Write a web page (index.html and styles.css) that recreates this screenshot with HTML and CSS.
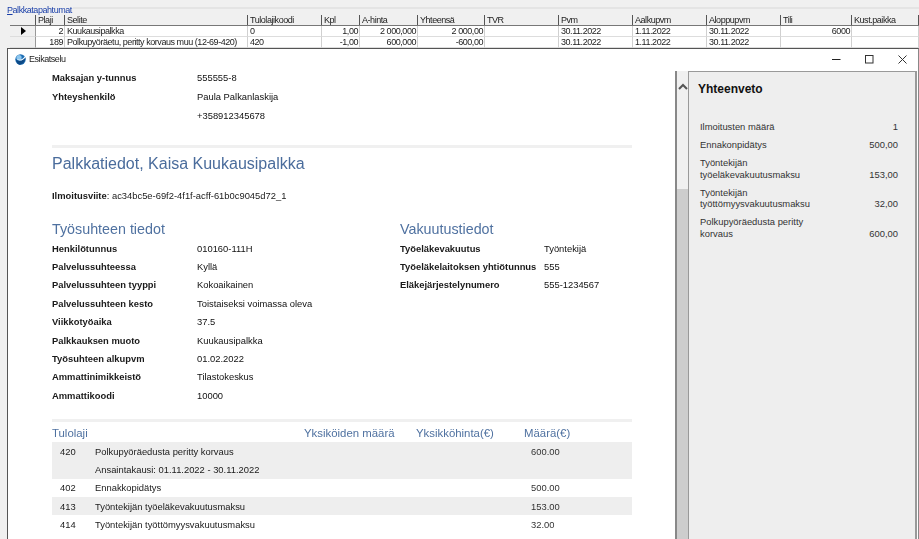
FILE: index.html
```html
<!DOCTYPE html>
<html lang="fi">
<head>
<meta charset="utf-8">
<title>Esikatselu</title>
<link rel="stylesheet" href="styles.css">
</head>
<body>
<section class="group">
  <div class="group-title"><span class="group-label"><u>P</u>alkkatapahtumat</span><span class="group-line"></span></div>
  <div class="grid">
    <div class="grid-row head">
      <div class="c"></div><div class="c">Plaji</div><div class="c">Selite</div><div class="c">Tulolajikoodi</div><div class="c">Kpl</div><div class="c">A-hinta</div><div class="c">Yhteensä</div><div class="c">TVR</div><div class="c">Pvm</div><div class="c">Aalkupvm</div><div class="c">Aloppupvm</div><div class="c">Tili</div><div class="c">Kust.paikka</div>
    </div>
    <div class="grid-row">
      <div class="c rowhead"><span class="arrow"></span></div><div class="c r">2</div><div class="c">Kuukausipalkka</div><div class="c">0</div><div class="c r">1,00</div><div class="c r">2 000,000</div><div class="c r">2 000,00</div><div class="c"></div><div class="c">30.11.2022</div><div class="c">1.11.2022</div><div class="c">30.11.2022</div><div class="c r">6000</div><div class="c"></div>
    </div>
    <div class="grid-row">
      <div class="c rowhead"></div><div class="c r">189</div><div class="c">Polkupyöräetu, peritty korvaus muu (12-69-420)</div><div class="c">420</div><div class="c r">-1,00</div><div class="c r">600,000</div><div class="c r">-600,00</div><div class="c"></div><div class="c">30.11.2022</div><div class="c">1.11.2022</div><div class="c">30.11.2022</div><div class="c r"></div><div class="c"></div>
    </div>
  </div>
</section>

<section class="window">
  <header class="titlebar">
    <svg class="app-icon" width="11" height="11" viewBox="0 0 11 11"><circle cx="5.5" cy="5.5" r="5.2" fill="#1f6fb5"/><circle cx="4" cy="3.5" r="2.6" fill="#8cc6ee"/><path d="M0.8 5.2C3 8 7 7.6 10.6 3.6 10 8 7.5 10.7 5 10.7 3 10.7 1.200 8 0.800 5.200Z" fill="#0d4a86"/><path d="M1.500 4.500C3.500 6.500 7 6.300 9.800 2.600L10.400 3.500C7.500 7.300 3.500 7.600 1.500 4.500Z" fill="#fff"/></svg>
    <span class="title">Esikatselu</span>
    <div class="controls">
      <svg width="9" height="9" viewBox="0 0 9 9"><path d="M0 4.500H8.500" stroke="#222" fill="none"/></svg>
      <svg width="9" height="9" viewBox="0 0 9 9"><rect x="0.500" y="0.500" width="7.500" height="7.500" stroke="#333" fill="none"/></svg>
      <svg width="9" height="9" viewBox="0 0 9 9"><path d="M0.500 0.500L8.500 8.500M8.500 0.500L0.500 8.500" stroke="#333" fill="none"/></svg>
    </div>
  </header>
  <div class="win-body">
    <main class="report">
      <dl class="pairs payer">
        <dt>Maksajan y-tunnus</dt><dd>555555-8</dd>
        <dt>Yhteyshenkilö</dt><dd>Paula Palkanlaskija</dd>
        <dt></dt><dd>+358912345678</dd>
      </dl>
      <hr class="rule">
      <h1>Palkkatiedot, Kaisa Kuukausipalkka</h1>
      <p class="ref"><b>Ilmoitusviite</b>: ac34bc5e-69f2-4f1f-acff-61b0c9045d72_1</p>
      <div class="cols">
        <div class="col-a">
          <h2>Työsuhteen tiedot</h2>
          <dl class="pairs">
            <dt>Henkilötunnus</dt><dd>010160-111H</dd>
            <dt>Palvelussuhteessa</dt><dd>Kyllä</dd>
            <dt>Palvelussuhteen tyyppi</dt><dd>Kokoaikainen</dd>
            <dt>Palvelussuhteen kesto</dt><dd>Toistaiseksi voimassa oleva</dd>
            <dt>Viikkotyöaika</dt><dd>37.5</dd>
            <dt>Palkkauksen muoto</dt><dd>Kuukausipalkka</dd>
            <dt>Työsuhteen alkupvm</dt><dd>01.02.2022</dd>
            <dt>Ammattinimikkeistö</dt><dd>Tilastokeskus</dd>
            <dt>Ammattikoodi</dt><dd>10000</dd>
          </dl>
        </div>
        <div class="col-b">
          <h2>Vakuutustiedot</h2>
          <dl class="pairs narrow">
            <dt>Työeläkevakuutus</dt><dd>Työntekijä</dd>
            <dt>Työeläkelaitoksen yhtiötunnus</dt><dd>555</dd>
            <dt>Eläkejärjestelynumero</dt><dd>555-1234567</dd>
          </dl>
        </div>
      </div>
      <hr class="rule rule2">
      <div class="income">
        <div class="inc-head"><span>Tulolaji</span><span>Yksiköiden määrä</span><span>Yksikköhinta(€)</span><span>Määrä(€)</span></div>
        <div class="inc-row shade"><span class="code">420</span><span>Polkupyöräedusta peritty korvaus</span><span class="amt">600.00</span><span class="sub">Ansaintakausi: 01.11.2022 - 30.11.2022</span></div>
        <div class="inc-row"><span class="code">402</span><span>Ennakkopidätys</span><span class="amt">500.00</span></div>
        <div class="inc-row shade"><span class="code">413</span><span>Työntekijän työeläkevakuutusmaksu</span><span class="amt">153.00</span></div>
        <div class="inc-row"><span class="code">414</span><span>Työntekijän työttömyysvakuutusmaksu</span><span class="amt">32.00</span></div>
      </div>
    </main>
    <div class="scrollbar">
      <svg class="up" width="10" height="7" viewBox="0 0 10 7"><path d="M1 6L5 2L9 6" stroke="#555" stroke-width="2" fill="none"/></svg>
      <div class="thumb"></div>
    </div>
    <aside class="summary">
      <h3>Yhteenveto</h3>
      <div class="sum-row first"><span>Ilmoitusten määrä</span><span>1</span></div>
      <div class="sum-row"><span>Ennakonpidätys</span><span>500,00</span></div>
      <div class="sum-row"><span>Työntekijän<br>työeläkevakuutusmaksu</span><span>153,00</span></div>
      <div class="sum-row"><span>Työntekijän<br>työttömyysvakuutusmaksu</span><span>32,00</span></div>
      <div class="sum-row"><span>Polkupyöräedusta peritty<br>korvaus</span><span>600,00</span></div>
    </aside>
  </div>
</section>
</body>
</html>
```
FILE: styles.css
```css
* { box-sizing: border-box; }
html, body { margin: 0; height: 539px; overflow: hidden; }
body {
  width: 919px;
  background: #f0f0f0;
  font-family: "Liberation Sans", Arial, sans-serif;
  color: #111;
  display: flex;
  flex-direction: column;
  filter: blur(0.3px);
}

.group { height: 48px; padding: 4px 0 0 7px; font-size: 9px; letter-spacing: -0.45px; flex: none; }
.group-title { display: flex; align-items: center; height: 11px; }
.group-label { color: #1a3fa8; }
.group-line { flex: 1; height: 2px; background: #e4e4e4; margin-left: 1px; margin-top: -3px; }
.grid { margin: 0 0 0 3px; }
.grid-row {
  display: grid;
  grid-template-columns: 26px 29px 183px 74px 38px 58px 67px 74px 74px 74px 74px 71px 67px;
  height: 11px;
  line-height: 11px;
  background: #fff;
}
.grid-row.head { background: #f0f0f0; height: 11px; line-height: 11px; border-bottom: 1px solid #777; }
.c { padding: 0 1px 0 2px; white-space: nowrap; overflow: hidden; border-right: 1px solid #d0d0d0; border-bottom: 1px solid #ddd; color: #222; }
.head .c { border-right: 1px solid #555; border-bottom: 0; }
.r { text-align: right; }
.rowhead { background: #f0f0f0; display: flex; align-items: center; justify-content: center; border-right-color: #999; }
.arrow { border-left: 5px solid #000; border-top: 4px solid transparent; border-bottom: 4px solid transparent; }

.window {
  flex: 1;
  margin-left: 7px;
  background: #fff;
  border-left: 1px solid #555;
  border-top: 1px solid #555;
  border-right: 1px solid #888;
  display: flex;
  flex-direction: column;
  min-height: 0;
}
.titlebar { height: 22px; flex: none; display: flex; align-items: center; padding: 0 11px 2px 7px; }
.app-icon { flex: none; }
.title { font-size: 9px; letter-spacing: -0.45px; margin-left: 3px; color: #222; }
.controls { margin-left: auto; display: flex; gap: 24px; }

.win-body { flex: 1; display: flex; min-height: 0; }
.report { width: 667px; flex: none; overflow: hidden; padding: 0 43px 0 44px; font-size: 9.400px; }
.pairs { margin: 0; display: grid; grid-template-columns: 145px 1fr; grid-auto-rows: 18.400px; align-items: center; }
.pairs dt { font-weight: bold; font-size: 9.400px; color: #1a1a1a; }
.pairs dd { margin: 0; }
.narrow { grid-template-columns: 144px 1fr; }
.payer { grid-auto-rows: 19px; margin-top: -3px; }
.rule { border: 0; height: 3px; background: #f0f0f0; margin: 20px 0 0; }
.rule2 { margin-top: 14.500px; }
h1 { font-size: 16px; font-weight: normal; color: #4a6c9c; margin: 5px 0 0; line-height: 21px; }
.ref { margin: 16px 0 0; line-height: 12px; color: #1a1a1a; }
.cols { display: flex; margin-top: 17px; }
.col-a { width: 348px; }
.col-b { flex: 1; }
h2 { font-size: 14.300px; font-weight: normal; color: #4f71a0; margin: 0; line-height: 20px; }
.income { margin-top: 3px; }
.inc-head { display: grid; grid-template-columns: 252px 112px 108px 1fr; color: #4f71a0; font-size: 11.400px; height: 17px; line-height: 17px; }
.inc-row {
  display: grid;
  grid-template-columns: 43px 436px 1fr;
  grid-auto-rows: 18.300px;
  align-items: center;
  color: #1a1a1a;
}
.shade { background: #eee; }
.code { padding-left: 8px; }
.amt { color: #333; }
.sub { grid-column: 2 / 4; }

.scrollbar {
  width: 13px;
  flex: none;
  border-left: 2px solid #888;
  background: #f0f0f0;
  display: flex;
  flex-direction: column;
  align-items: center;
}
.up { margin-top: 12px; flex: none; }
.thumb { margin-top: 99px; flex: 1; width: 100%; background: #cdcdcd; }

.summary {
  width: 229px;
  flex: none;
  background: #eee;
  border: 1px solid #999;
  border-width: 1px 2px 0 1px;
  padding: 0 17px 0 9px;
  font-size: 9.400px;
  color: #333;
}
h3 { margin: 10px 0 0; font-size: 12px; line-height: 14px; color: #111; }
.sum-row { display: flex; justify-content: space-between; align-items: flex-end; padding-left: 2px; line-height: 11.500px; margin-top: 6.500px; }
.sum-row.first { margin-top: 25px; }
```
